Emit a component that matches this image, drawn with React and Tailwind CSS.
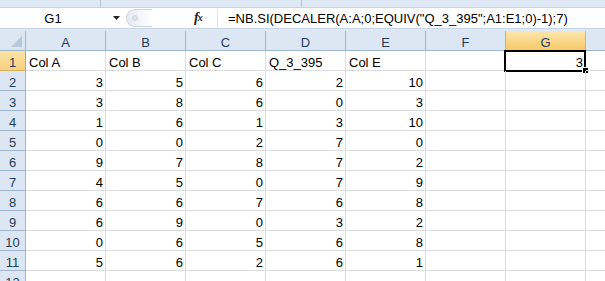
const cols = ["A", "B", "C", "D", "E", "F", "G", ""];

const data = [
  ["Col A", "Col B", "Col C", "Q_3_395", "Col E", "", 3, ""],
  [3, 5, 6, 2, 10, "", "", ""],
  [3, 8, 6, 0, 3, "", "", ""],
  [1, 6, 1, 3, 10, "", "", ""],
  [0, 0, 2, 7, 0, "", "", ""],
  [9, 7, 8, 7, 2, "", "", ""],
  [4, 5, 0, 7, 9, "", "", ""],
  [6, 6, 7, 6, 8, "", "", ""],
  [6, 9, 0, 3, 2, "", "", ""],
  [0, 6, 5, 6, 8, "", "", ""],
  [5, 6, 2, 6, 1, "", "", ""],
  ["", "", "", "", "", "", "", ""],
];

const FormulaBar = () => (
  <div className="h-[22px] flex bg-white border-y border-[#c5d4e6]">
    <div className="w-[106px] flex items-end justify-center pb-[2px]">G1</div>
    <div className="w-[20px] flex items-center justify-center">
      <svg width="7" height="4" viewBox="0 0 7 4">
        <polygon points="0,0 7,0 3.5,4" fill="#222" />
      </svg>
    </div>
    <div className="w-[68px] flex items-center">
      <div className="h-[18px] w-[26px] rounded-l-full border border-r-0 border-[#c9d3de] bg-gradient-to-r from-[#e6ebf1] to-white flex items-center pl-[5px]">
        <div className="w-[6px] h-[6px] rounded-full bg-[#dfe4ea] border border-[#cfd6de]" />
      </div>
    </div>
    <div className="w-[14px] flex items-end pb-[3px] font-['Liberation_Serif'] italic font-bold text-[14px] text-[#222]">
      f<span className="text-[10px] -ml-[1px]">x</span>
    </div>
    <div className="w-[10px] border-r border-[#dfe3e8] my-[1px]" />
    <div className="flex items-end pb-[2px] pl-[10px] whitespace-nowrap">
      =NB.SI(DECALER(A:A;0;EQUIV("Q_3_395";A1:E1;0)-1);7)
    </div>
  </div>
);

export default function App() {
  return (
    <div className="w-[605px] h-[281px] overflow-hidden bg-white text-[13px] leading-[15px] text-black font-['Liberation_Sans',Arial,sans-serif]">
      <div className="h-[7px] bg-[#dfe9f5] flex">
        <div className="w-[101px] border-r border-[#b7c8dc]" />
        <div className="w-[201px] border-r border-[#b7c8dc]" />
      </div>
      <FormulaBar />
      <div className="h-[2px] bg-[#dfe9f5]" />
      <div className="grid grid-cols-[26px_repeat(7,80px)_80px] auto-rows-[20px]">
        <div className="relative bg-[#dde7f3] border-r border-b border-[#9eb6ce]">
          <svg className="absolute right-[3px] bottom-[3px]" width="11" height="11" viewBox="0 0 11 11">
            <polygon points="11,0 11,11 0,11" fill="#b9c8da" />
          </svg>
        </div>
        {cols.map((c, i) => (
          <div
            key={i}
            className={
              c === "G"
                ? "flex items-end justify-center bg-gradient-to-b from-[#fbe6ad] to-[#f5c965] border-r border-b border-r-[#e2b35c] border-b-[#f29436] text-[#243c5c]"
                : "flex items-end justify-center bg-[#dde7f3] border-r border-b border-[#9eb6ce] text-[#243c5c]"
            }
          >
            {c}
          </div>
        ))}
        {data.map((row, r) => (
          <Row key={r} row={row} n={r + 1} />
        ))}
      </div>
    </div>
  );
}

const Row = ({ row, n }) => (
  <>
    <div
      className={
        n === 1
          ? "flex items-end justify-center bg-gradient-to-b from-[#fbe3a3] to-[#f7d182] border-r border-b border-r-[#f29436] border-b-[#e2b35c] text-[#243c5c]"
          : "flex items-end justify-center bg-[#dde7f3] border-r border-b border-[#9eb6ce] text-[#243c5c]"
      }
    >
      {n}
    </div>
    {row.map((v, i) => {
      const isNum = typeof v === "number";
      const selected = n === 1 && i === 6;
      return (
        <div
          key={i}
          className={
            "relative flex items-end border-r border-b border-[#dadcdd] px-[2px] " +
            (isNum ? "justify-end" : "justify-start pl-[3px]")
          }
        >
          {v}
          {selected && (
            <>
              <div className="absolute -left-[2px] -top-[1px] w-[82px] h-[22px] border-2 border-black" />
              <div className="absolute right-[-4px] bottom-[-4px] w-[7px] h-[7px] bg-black border border-white" />
            </>
          )}
        </div>
      );
    })}
  </>
);
